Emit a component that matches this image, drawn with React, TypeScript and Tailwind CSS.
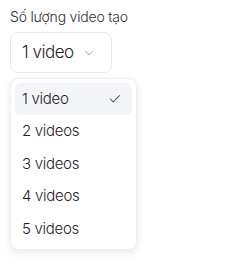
import { Check, ChevronDown } from "lucide-react"

const options = ["1 video", "2 videos", "3 videos", "4 videos", "5 videos"]

export default function App() {
  const selected = 0
  return (
    <div
      className="min-h-screen bg-white pl-[10px] pt-[7px] text-[#1f2328]"
      style={{ fontFamily: "Inter, 'Noto Sans', sans-serif" }}
    >
      <div className="text-[14px] font-[350] leading-5 tracking-[-0.2px] text-[#2b2f33]">Số lượng video tạo</div>
      <button className="mt-[5px] flex h-[41px] w-[102px] items-center justify-between rounded-lg border border-[#e6e8eb] bg-white pl-[11px] pr-[15px]">
        <span className="text-[17px] font-[350] tracking-[-0.5px]">1 video</span>
        <ChevronDown className="h-[14px] w-[14px] text-[#a7adb4]" strokeWidth={1.75} />
      </button>
      <div className="mt-[5px] w-[127px] rounded-lg border border-[#eceef0] bg-white p-1 shadow-[0_3px_8px_rgba(0,0,0,0.09)]">
        {options.map((o, i) => (
          <div
            key={o}
            className={`flex h-[32.4px] items-center justify-between rounded-md pl-[7px] pr-[10px] text-[15px] font-[350] tracking-[-0.3px] ${
              i === selected ? "bg-[#f3f5f8]" : ""
            }`}
          >
            <span>{o}</span>
            {i === selected && <Check className="h-[14px] w-[14px] text-[#4b5159]" strokeWidth={1.75} />}
          </div>
        ))}
      </div>
    </div>
  )
}
